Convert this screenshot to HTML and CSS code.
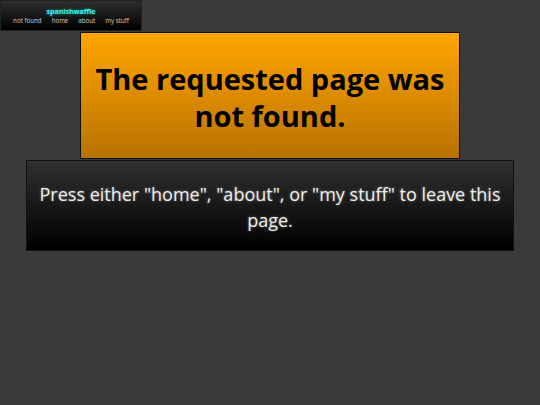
FILE: index.html
```html
<!DOCTYPE html>
<html>
<head>
<meta charset="utf-8">
<link rel="stylesheet" href="styles.css">
</head>
<body>
<nav class="nav">
  <div class="brand">spanishwaffle</div>
  <div class="links">
    <span>not found</span>
    <span>home</span>
    <span>about</span>
    <span>my stuff</span>
  </div>
</nav>
<main class="main">
  <section class="alert">
    <h1>The requested page was not found.</h1>
  </section>
  <section class="info">
    <p>Press either "home", "about", or "my stuff" to leave this page.</p>
  </section>
</main>
</body>
</html>
```
FILE: styles.css
```css
html, body {
  margin: 0;
  padding: 0;
  background: #3a3a3a;
  font-family: "Open Sans", sans-serif;
}
.nav {
  width: 142px;
  height: 31px;
  box-sizing: border-box;
  border: 1px solid #222;
  background: linear-gradient(#2e2e2e, #000);
  display: flex;
  flex-direction: column;
  align-items: center;
  padding-top: 6px;
}
.brand {
  color: #44f0ea;
  font-size: 7px;
  font-weight: 700;
  line-height: 9px;
  text-shadow: 0 0 3px #1bb;
}
.links {
  display: flex;
  gap: 10px;
  color: #ccc;
  font-size: 6.2px;
  line-height: 9px;
}
.main {
  display: flex;
  flex-direction: column;
  align-items: center;
  padding-top: 1px;
}
.alert {
  width: 380px;
  height: 127px;
  box-sizing: border-box;
  border: 1px solid #111;
  background: linear-gradient(#ffa500, #b87200);
  display: flex;
  align-items: center;
  justify-content: center;
  padding-top: 3px;
}
.alert h1 {
  margin: 0;
  text-align: center;
  font-size: 29px;
  line-height: 37px;
  font-weight: 700;
  color: #000;
}
.info {
  margin-top: 1px;
  width: 488px;
  height: 91px;
  box-sizing: border-box;
  border: 1px solid #111;
  background: linear-gradient(#303030, #000);
  display: flex;
  align-items: center;
  justify-content: center;
  padding-top: 2px;
}
.info p {
  margin: 0;
  text-align: center;
  color: #eee;
  font-size: 18px;
  line-height: 26px;
  text-shadow: 0 0 3px rgba(255,255,255,0.4);
}
```
